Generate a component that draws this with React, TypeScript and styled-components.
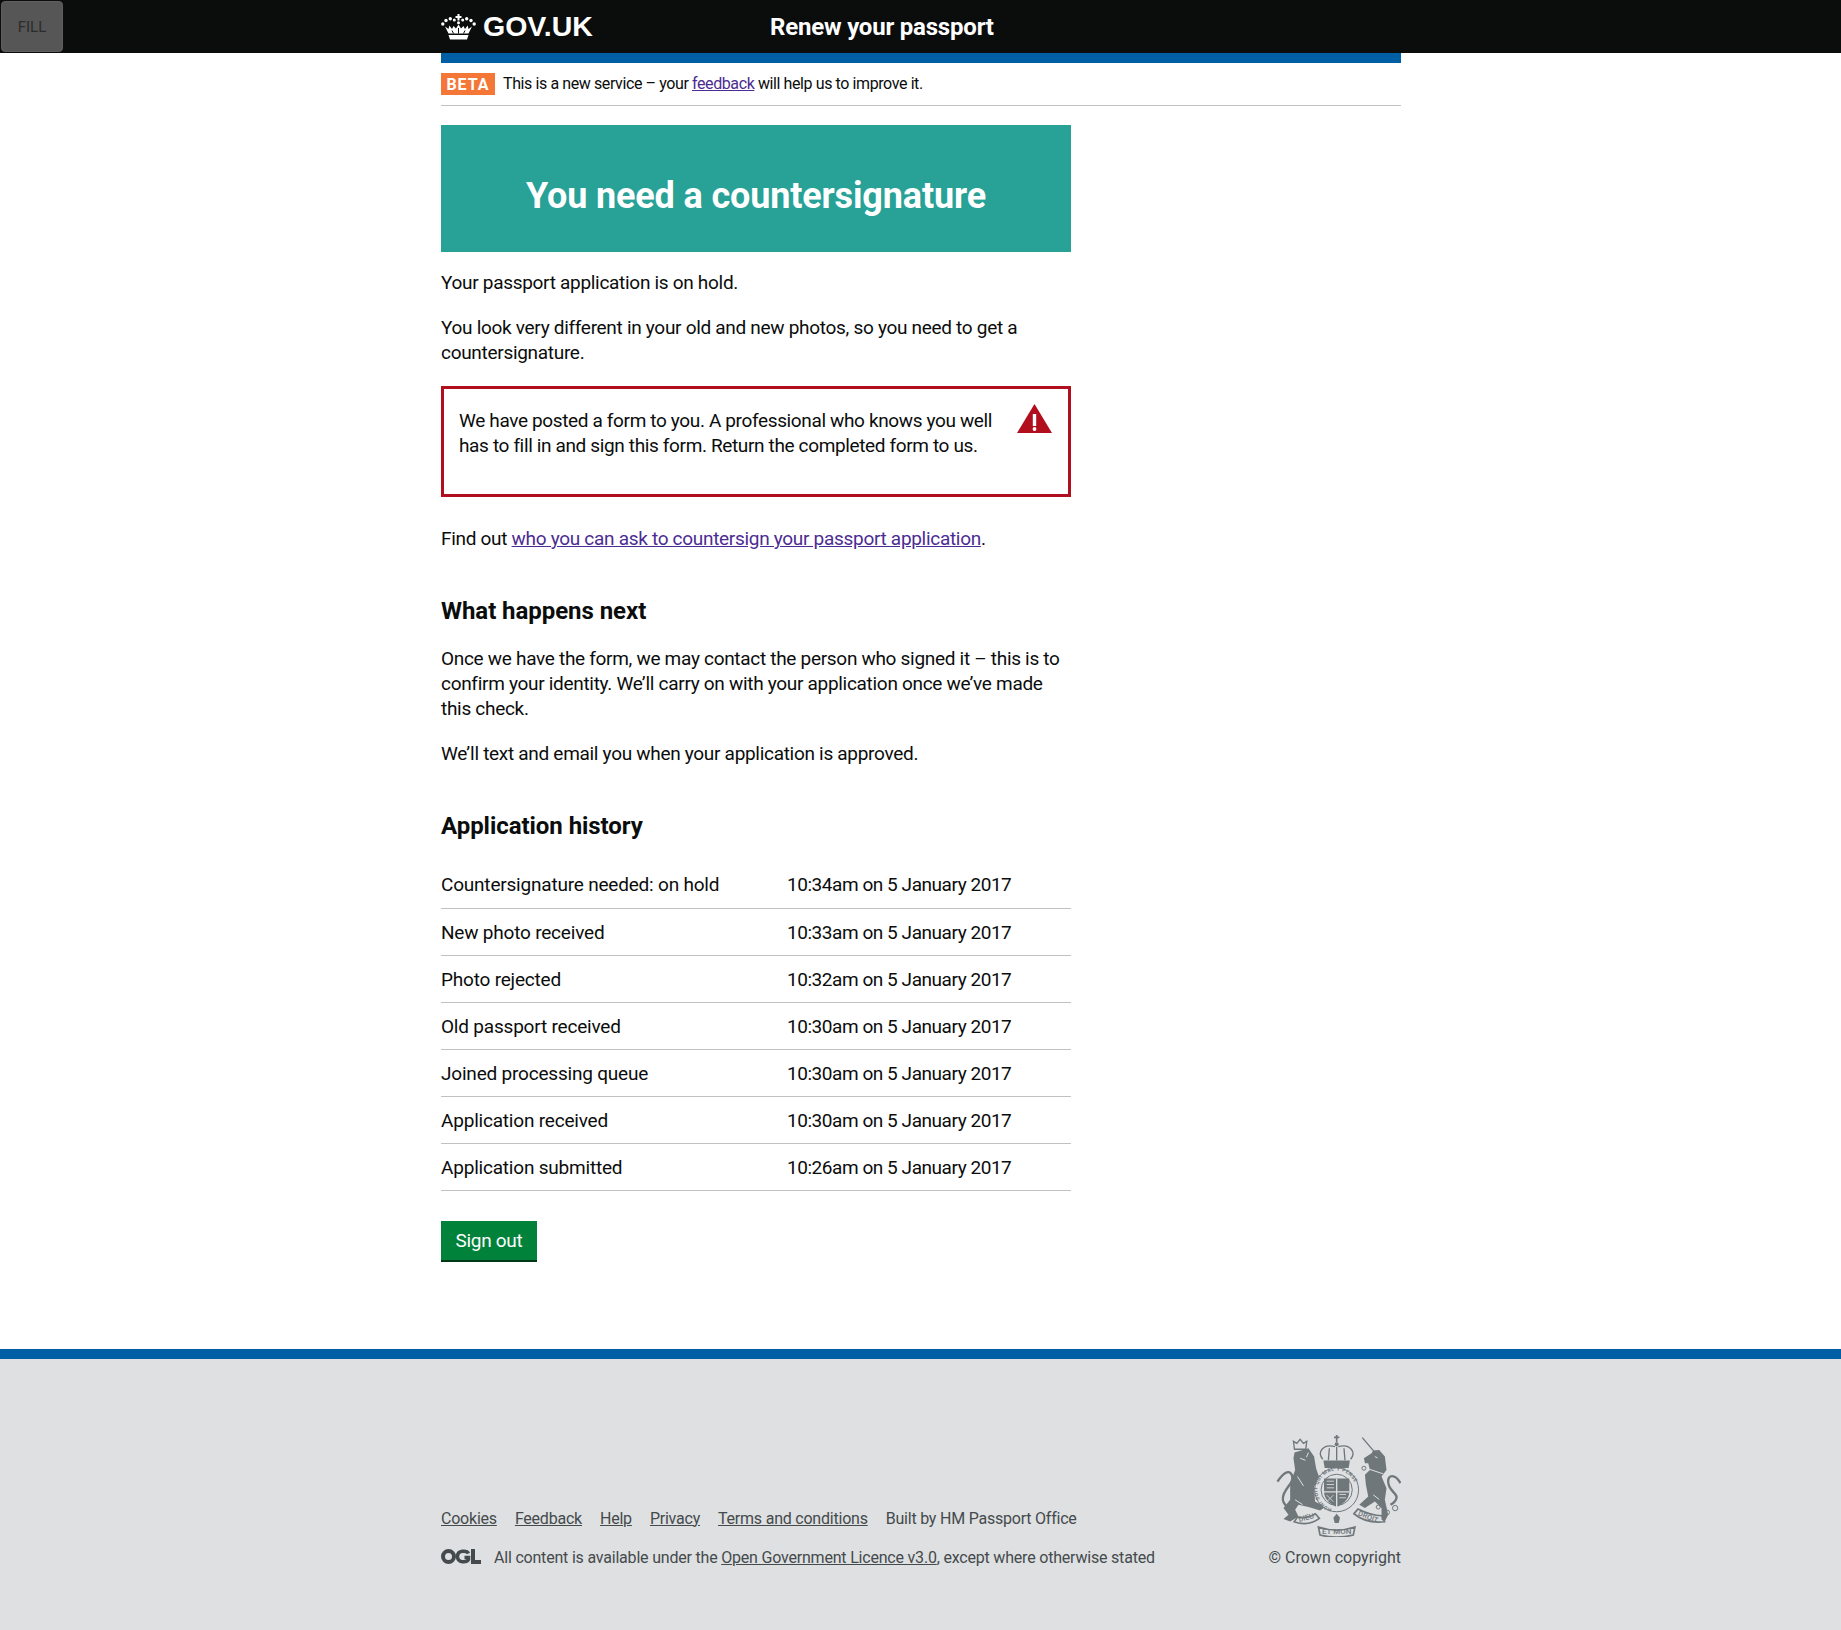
import React from 'react';
import styled, { createGlobalStyle } from 'styled-components';

const FONT = `Roboto, "Noto Sans", Arial, sans-serif`;

const GlobalStyle = createGlobalStyle`
	* {
		box-sizing: border-box;
	}

	html,
	body {
		margin: 0;
		padding: 0;
		background: #fff;
		color: #0b0c0c;
		font-family: ${FONT};
	}
`;

const FillButton = styled.button`
	position: absolute;
	top: 1px;
	left: 1px;
	width: 62px;
	height: 51px;
	padding: 0;
	border: 1px solid #5f5f5f;
	border-radius: 4px;
	background: #565656;
	color: #2b2b2b;
	font-family: ${FONT};
	font-size: 15px;
`;

const Header = styled.header`
	height: 53px;
	background: #0b0c0c;
	color: #fff;
`;

const HeaderInner = styled.div`
	display: flex;
	align-items: center;
	width: 960px;
	height: 100%;
	margin-left: calc(50% - 479.5px);
`;

const Logo = styled.div`
	display: flex;
	align-items: center;
	gap: 7px;
	width: 329px;
	font-family: "Liberation Sans", Arial, sans-serif;
	font-size: 28.500px;
	font-weight: 700;
`;

const ServiceName = styled.div`
	font-size: 24px;
	font-weight: 700;
	letter-spacing: -0.2px;
`;

const Wrapper = styled.div`
	width: 960px;
	margin-left: calc(50% - 479.5px);
`;

const BlueBar = styled.div`
	height: 10px;
	background: #005ea5;
`;

const PhaseBanner = styled.div`
	display: flex;
	align-items: center;
	gap: 8px;
	height: 43px;
	padding-bottom: 1px;
	border-bottom: 1px solid #bfc1c3;
	font-size: 16px;
	letter-spacing: -0.4px;
`;

const BetaTag = styled.strong`
	display: block;
	width: 54px;
	height: 22px;
	margin-top: 1px;
	background: #f47738;
	color: #fff;
	font-size: 16px;
	line-height: 24px;
	text-align: center;
	letter-spacing: 1px;
`;

const Main = styled.main`
	width: 630px;
	padding-top: 19px;
	padding-bottom: 89px;
`;

const Panel = styled.div`
	display: flex;
	align-items: center;
	justify-content: center;
	height: 127px;
	padding-top: 15px;
	margin-bottom: 18px;
	background: #28a197;
	color: #fff;
`;

const PanelTitle = styled.h1`
	margin: 0;
	font-size: 36px;
	font-weight: 700;
	letter-spacing: -0.15px;
`;

const Para = styled.p`
	margin: 0 0 20px;
	font-size: 19px;
	line-height: 25px;
	letter-spacing: -0.3px;
`;

const Link = styled.a`
	color: #4c2c92;
	text-decoration: underline;
`;

const Notice = styled.div`
	display: flex;
	justify-content: space-between;
	height: 111px;
	padding: 19px 16px 0 15px;
	margin: 21px 0 29px;
	border: 3px solid #b10e1e;
`;

const NoticeText = styled.p`
	width: 545px;
	margin: 0;
	font-size: 19px;
	line-height: 25px;
	letter-spacing: -0.36px;
`;

const WarningIcon = styled.svg`
	flex: none;
	width: 35px;
	height: 29px;
	margin-top: -4px;
`;

const SectionTitle = styled.h2`
	margin: 45px 0 20px;
	font-size: 24px;
	font-weight: 700;
	line-height: 30px;
	letter-spacing: -0.05px;
`;

const HistoryTable = styled.table`
	width: 100%;
	margin-top: 17px;
	border-collapse: collapse;
	font-size: 19px;
`;

const HistoryCell = styled.td`
	height: 47px;
	padding: 1px 0 0;
	border-bottom: 1px solid #bfc1c3;
	line-height: 25px;
	letter-spacing: -0.45px;

	&:first-child {
		width: 346px;
		letter-spacing: -0.2px;
	}
`;

const SignOut = styled.a`
	display: block;
	width: 96px;
	height: 39px;
	margin-top: 30px;
	background: #00823b;
	box-shadow: 0 2px 0 #003618;
	color: #fff;
	font-size: 19px;
	line-height: 39px;
	letter-spacing: -0.3px;
	text-align: center;
`;

const Footer = styled.footer`
	height: 281px;
	border-top: 10px solid #005ea5;
	background: #dee0e2;
	color: #454a4c;
`;

const FooterInner = styled.div`
	display: flex;
	justify-content: space-between;
	align-items: flex-end;
	width: 960px;
	height: 100%;
	margin-left: calc(50% - 479.5px);
	padding-bottom: 62px;
`;

const FooterLinks = styled.ul`
	display: flex;
	gap: 18px;
	margin: 0 0 19px;
	padding: 0;
	list-style: none;
	font-size: 16px;
	line-height: 20px;
	letter-spacing: -0.22px;
`;

const FooterLink = styled.a`
	color: #454a4c;
	text-decoration: underline;
`;

const Licence = styled.div`
	display: flex;
	align-items: center;
	gap: 13px;
	font-size: 16px;
	line-height: 20px;
	letter-spacing: -0.2px;
`;

const OglLogo = styled.svg`
	flex: none;
	width: 40px;
	height: 15px;
	margin-top: -3px;
`;

const Copyright = styled.div`
	display: flex;
	flex-direction: column;
	align-items: flex-end;
	gap: 11px;
	font-size: 16px;
	line-height: 20px;
`;

const Crest = styled.svg`
	width: 125px;
	height: 103px;
`;

const history = [
	['Countersignature needed: on hold', '10:34am on 5 January 2017'],
	['New photo received', '10:33am on 5 January 2017'],
	['Photo rejected', '10:32am on 5 January 2017'],
	['Old passport received', '10:30am on 5 January 2017'],
	['Joined processing queue', '10:30am on 5 January 2017'],
	['Application received', '10:30am on 5 January 2017'],
	['Application submitted', '10:26am on 5 January 2017'],
];

const footerLinks = ['Cookies', 'Feedback', 'Help', 'Privacy', 'Terms and conditions'];

function Crown() {
	return (
		<svg width="35" height="26" viewBox="0 0 35 26" fill="#fff" aria-hidden="true">
			<path d="M16.500 0h2v2h2v2h-2v2.500h-2V4h-2V2h2z" />
			<circle cx="1.800" cy="10" r="1.700" />
			<circle cx="5" cy="6.500" r="1.700" />
			<circle cx="9.300" cy="4.800" r="1.700" />
			<circle cx="13.300" cy="6" r="1.500" />
			<circle cx="21.700" cy="6" r="1.500" />
			<circle cx="25.700" cy="4.800" r="1.700" />
			<circle cx="30" cy="6.500" r="1.700" />
			<circle cx="33.200" cy="10" r="1.700" />
			<circle cx="17.500" cy="8.800" r="1.500" />
			<path d="M7.500 19.500L4 12.500l3.500 2.500.8-3.500 2.700 3.500 1.500-3 2.500 2.500 2.500-4 2.500 4 2.500-2.500 1.500 3 2.700-3.500.8 3.500 3.500-2.500-3.500 7z" />
			<path d="M7.500 21h20l-1.500 4.500H9z" />
			<path d="M11 16.500l1.500 3M17.500 14v5.500M24 16.500l-1.500 3" stroke="#0b0c0c" strokeWidth="1" fill="none" />
		</svg>
	);
}

function CoatOfArms() {
	return (
		<Crest viewBox="108 42 375 310" fill="#6f777b" stroke="none" aria-hidden="true">
			<defs>
				<path id="garter" d="M290 268a58 58 0 1 1 .1 0" />
			</defs>
			{/* lion */}
			<path d="M163 98l42-13 17 25 6 35 12 35-18 20 3 45 30 17-15 10-35-10-30-7-10 15 10 20-25 15-20-7 15-13-15-20 20-25v-50l15-40-5-35z" />
			<path d="M112 185c13-20 33-40 43-20 10 25-25 40-27 70-2 15 12 25 17 30" fill="none" stroke="#6f777b" strokeWidth="7" />
			<path d="M163 88l-3-24 10 6 10-12 10 12 10-6-3 24z" fill="none" stroke="#6f777b" strokeWidth="4" />
			<path d="M180 115l16 6M205 98l-6 14M172 170l18 28M165 240l22 14" fill="none" stroke="#dee0e2" strokeWidth="3" />
			{/* unicorn */}
			<path d="M367 53l36 42" fill="none" stroke="#6f777b" strokeWidth="4" />
			<path d="M372 115l23-15 5-8 18-2 17 20 5 40-15 20 15 35-5 35 10 45-10 20-10-5v-35l-20-20-30 20-17-10 27-25-7-35-3-30 15-15-5-20h-10z" />
			<path d="M482 190c-17-30-37-25-37-5 0 25 20 30 25 45 2 15-10 20-18 25" fill="none" stroke="#6f777b" strokeWidth="7" />
			<path d="M388 148l42 14M405 110l8 4M400 225l18 14" fill="none" stroke="#dee0e2" strokeWidth="3" />
			<g fill="none" stroke="#6f777b" strokeWidth="3">
				<circle cx="415" cy="262" r="6" />
				<circle cx="442" cy="278" r="7" />
				<circle cx="466" cy="265" r="8" />
				<circle cx="372" cy="145" r="6" />
			</g>
			{/* crown */}
			<path d="M290 45v22M282 52h16" fill="none" stroke="#6f777b" strokeWidth="5" />
			<circle cx="290" cy="73" r="6" />
			<path d="M248 118c-18-22 2-48 37-38M332 118c18-22-2-48-37-38M290 80v42M268 85l-3 36M312 85l3 36" fill="none" stroke="#6f777b" strokeWidth="4" />
			<path d="M250 122h80l-4 22h-72z" />
			{/* garter and shield */}
			<circle cx="290" cy="210" r="66" fill="#dee0e2" stroke="#6f777b" strokeWidth="3" />
			<circle cx="290" cy="210" r="47" fill="none" stroke="#6f777b" strokeWidth="3" />
			<text fontFamily="Roboto, Arial, sans-serif" fontSize="15" fontWeight="700" letterSpacing="1.500">
				<textPath href="#garter" startOffset="4%">HONI SOIT QUI MAL Y PENSE</textPath>
			</text>
			<path d="M252 176h76v40c0 24-22 38-38 46-16-8-38-22-38-46z" />
			<path d="M290 176v86M252 216h76" fill="none" stroke="#dee0e2" strokeWidth="4" />
			<path d="M260 184h22M260 194h22M260 204h22M298 224h20M298 234h20M260 226l20 20M280 226l-20 20" fill="none" stroke="#dee0e2" strokeWidth="2.500" />
			{/* motto */}
			<path d="M290 282l10 12-4 16h-12l-4-16z" />
			<g fill="none" stroke="#6f777b" strokeWidth="5">
				<path d="M162 306c28 10 55 6 76-10l-12-14c-16 10-36 14-54 10z" />
				<path d="M235 322c36 12 74 12 110 0l-5 24c-32 8-68 8-100 0z" />
				<path d="M342 282c24 20 56 28 92 24l-8-18c-28 0-48-8-72-20z" />
			</g>
			<g fontFamily="Roboto, Arial, sans-serif" fontSize="22" fontWeight="500" fill="#6f777b" stroke="none" textAnchor="middle">
				<text x="200" y="301" transform="rotate(-14 200 301)">DIEU</text>
				<text x="290" y="344" fontSize="24">ET MON</text>
				<text x="382" y="298" transform="rotate(22 382 298)">DROIT</text>
			</g>
		</Crest>
	);
}

export default function App() {
	return (
		<>
			<GlobalStyle />
			<FillButton type="button">FILL</FillButton>
			<Header>
				<HeaderInner>
					<Logo>
						<Crown />
						GOV.UK
					</Logo>
					<ServiceName>Renew your passport</ServiceName>
				</HeaderInner>
			</Header>
			<Wrapper>
				<BlueBar />
				<PhaseBanner>
					<BetaTag>BETA</BetaTag>
					<span>
						This is a new service – your <Link href="#">feedback</Link> will help us to improve it.
					</span>
				</PhaseBanner>
				<Main>
					<Panel>
						<PanelTitle>You need a countersignature</PanelTitle>
					</Panel>
					<Para>Your passport application is on hold.</Para>
					<Para>You look very different in your old and new photos, so you need to get a countersignature.</Para>
					<Notice>
						<NoticeText>
							We have posted a form to you. A professional who knows you well has to fill in and sign this form. Return the completed form to us.
						</NoticeText>
						<WarningIcon viewBox="0 0 35 29" aria-hidden="true">
							<path d="M17.500 0L35 29H0z" fill="#b10e1e" />
							<rect x="15.800" y="10" width="3.400" height="12" fill="#fff" />
							<circle cx="17.500" cy="25" r="1.900" fill="#fff" />
						</WarningIcon>
					</Notice>
					<Para>
						Find out <Link href="#">who you can ask to countersign your passport application</Link>.
					</Para>
					<SectionTitle>What happens next</SectionTitle>
					<Para>
						Once we have the form, we may contact the person who signed it – this is to confirm your identity. We’ll carry on with your application once we’ve made this check.
					</Para>
					<Para>We’ll text and email you when your application is approved.</Para>
					<SectionTitle>Application history</SectionTitle>
					<HistoryTable>
						<tbody>
							{history.map(([event, time]) => (
								<tr key={event}>
									<HistoryCell>{event}</HistoryCell>
									<HistoryCell>{time}</HistoryCell>
								</tr>
							))}
						</tbody>
					</HistoryTable>
					<SignOut>Sign out</SignOut>
				</Main>
			</Wrapper>
			<Footer>
				<FooterInner>
					<div>
						<FooterLinks>
							{footerLinks.map((label) => (
								<li key={label}>
									<FooterLink href="#">{label}</FooterLink>
								</li>
							))}
							<li>Built by HM Passport Office</li>
						</FooterLinks>
						<Licence>
							<OglLogo viewBox="0 0 40 15" aria-hidden="true">
								<ellipse cx="7.500" cy="7.500" rx="5.500" ry="5.500" fill="none" stroke="#454a4c" strokeWidth="4" />
								<path d="M27.500 4.500C26 1.500 16.500.5 16.500 7.500S26 13.500 27.500 10.500V8.500H23.500" fill="none" stroke="#454a4c" strokeWidth="3.500" />
								<path d="M32 0V13H40" fill="none" stroke="#454a4c" strokeWidth="4" />
							</OglLogo>
							<span>
								All content is available under the <FooterLink href="#">Open Government Licence v3.0</FooterLink>, except where otherwise stated
							</span>
						</Licence>
					</div>
					<Copyright>
						<CoatOfArms />
						<span>© Crown copyright</span>
					</Copyright>
				</FooterInner>
			</Footer>
		</>
	);
}
